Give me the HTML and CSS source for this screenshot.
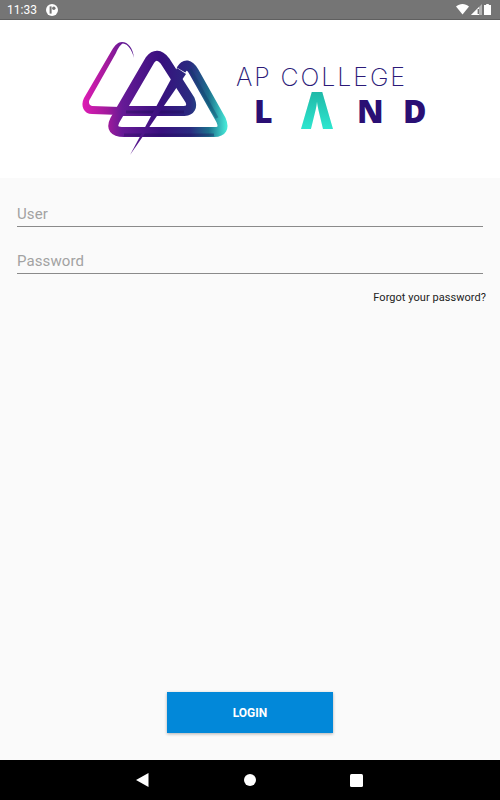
FILE: index.html
```html
<!DOCTYPE html>
<html lang="en">
<head>
  <meta charset="UTF-8">
  <meta name="viewport" content="width=device-width, initial-scale=1.0">
  <title>AP College Land</title>
  <link rel="stylesheet" href="styles.css">
</head>
<body>
  <div class="status-bar">
    <div class="status-left">
      <span class="clock">11:33</span>
      <svg class="status-app" width="12" height="12" viewBox="0 0 12 12">
        <circle cx="6" cy="6" r="6" fill="#fff"/>
        <rect x="3.6" y="2.4" width="2" height="7.2" fill="#757575"/>
        <circle cx="7.8" cy="4.2" r="1.7" fill="#757575"/>
      </svg>
    </div>
    <div class="status-right">
      <svg width="13" height="11" viewBox="0 0 13 11"><path d="M0 2.6C3.6-.8 9.4-.8 13 2.6L6.5 10.6Z" fill="#fff"/></svg>
      <svg width="11" height="11" viewBox="0 0 11 11"><path d="M11 0V11H0Z" fill="#fff" opacity=".45"/><path d="M8 3V11H0L8 3Z" fill="#fff"/><rect x="6.6" y="5" width="1.4" height="5" fill="#757575"/></svg>
      <svg width="7" height="11" viewBox="0 0 7 11"><path d="M2.2 0H4.8V1H7V11H0V1H2.2Z" fill="#fff"/></svg>
    </div>
  </div>

  <header class="logo-area">
    <svg class="logo" width="350" height="120" viewBox="75 40 350 120">
      <defs>
        <linearGradient id="ribbon" gradientUnits="userSpaceOnUse" x1="82" y1="0" x2="226" y2="0">
          <stop offset="0" stop-color="#e01cb4"/>
          <stop offset="0.18" stop-color="#a01a9c"/>
          <stop offset="0.28" stop-color="#661a96"/>
          <stop offset="0.55" stop-color="#38107e"/>
          <stop offset="0.75" stop-color="#2a2a80"/>
          <stop offset="0.88" stop-color="#1c6f8c"/>
          <stop offset="1" stop-color="#45e6d6"/>
        </linearGradient>
        <linearGradient id="peak" gradientUnits="userSpaceOnUse" x1="0" y1="92" x2="0" y2="129">
          <stop offset="0" stop-color="#1fb9a8"/>
          <stop offset="1" stop-color="#2ee6cf"/>
        </linearGradient>
      </defs>
      <!-- pink end of the ribbon, gets thinner towards the top -->
      <path d="M134 58C133 48 128 42 122 42C118 42 115 45 112 50L84 98C80 106 84 114 92 114L120 115L120 107L92 106C89 105 88 102 90 99L116 53C118 48 121 44 123 43.500C128 44 132 50 134 58Z" fill="url(#ribbon)"/>
      <!-- middle triangle -->
      <path d="M120 111H184Q194 110 190 100L165 61Q157 51 150 60L115 120Q109 132 124 132H214Q226 132 221 120L194 72Q187 60 181 70" fill="none" stroke="url(#ribbon)" stroke-width="10" stroke-linejoin="round"/>
      <path d="M126 112H184" fill="none" stroke="#1d0b55" stroke-width="3" opacity=".4"/>
      <path d="M124 135H214" fill="none" stroke="#1d0b55" stroke-width="3" opacity=".35"/>
      <path d="M190 69L217 118" fill="none" stroke="#0d3f66" stroke-width="3" opacity=".4"/>
      <!-- thin diagonal that ends in a point -->
      <path d="M177 68L186 74L130 155Z" fill="url(#ribbon)"/>
      <text class="logo-top" x="236" y="86">AP COLLEGE</text>
      <text class="logo-land" x="254" y="123">L</text>
      <text class="logo-peak" x="301" y="129" textLength="32" lengthAdjust="spacingAndGlyphs">&#923;</text>
      <text class="logo-land" x="357" y="123">N</text>
      <text class="logo-land" x="403" y="123">D</text>
    </svg>
  </header>

  <main class="login">
    <form class="login-form">
      <input class="field" type="text" placeholder="User">
      <input class="field" type="password" placeholder="Password">
      <a class="forgot" href="#">Forgot your password?</a>
    </form>
    <button class="login-btn" type="button">LOGIN</button>
  </main>

  <nav class="nav-bar">
    <svg width="13" height="14" viewBox="0 0 13 14"><path d="M12.500 0V14L0 7Z" fill="#fff"/></svg>
    <svg class="nav-home" width="12" height="12" viewBox="0 0 12 12"><circle cx="6" cy="6" r="6" fill="#fff"/></svg>
    <svg width="13" height="13" viewBox="0 0 13 13"><rect width="13" height="13" rx="1.500" fill="#fff"/></svg>
  </nav>
</body>
</html>
```

FILE: styles.css
```css
* {
  box-sizing: border-box;
}

body {
  font-family: Roboto, "Liberation Sans", sans-serif;
  margin: 0;
  height: 800px;
  display: flex;
  flex-direction: column;
  background-color: #fafafa;
  overflow: hidden;
}

.status-bar {
  height: 20px;
  padding: 0 9px 0 7px;
  display: flex;
  justify-content: space-between;
  align-items: center;
  background-color: #757575;
  border-bottom: 1px solid #5f5f5f;
}

.status-left {
  display: flex;
  align-items: center;
  gap: 9px;
}

.clock {
  font-size: 12px;
  color: #fff;
}

.status-right {
  display: flex;
  align-items: center;
  gap: 2px;
}

.logo-area {
  height: 158px;
  background-color: #fff;
  display: flex;
  justify-content: center;
  align-items: flex-start;
  padding-top: 20px;
}

.logo {
  display: block;
  overflow: visible;
}

.logo-top {
  font-family: Inter, Lato, sans-serif;
  font-weight: 200;
  font-size: 25px;
  letter-spacing: 1.9px;
  fill: #2b1a78;
}

.logo-land {
  font-family: "Open Sans", sans-serif;
  font-weight: 800;
  font-size: 32px;
  fill: #2a0f74;
}

.logo-peak {
  font-family: "Open Sans", sans-serif;
  font-weight: 800;
  font-size: 52px;
  fill: url(#peak);
}

.login {
  flex: 1;
  display: flex;
  flex-direction: column;
  justify-content: space-between;
  padding: 0 14px 27px 17px;
}

.login-form {
  display: flex;
  flex-direction: column;
  padding-top: 22px;
}

.field {
  width: 466px;
  height: 27px;
  margin-bottom: 20px;
  padding: 2px 0 0;
  border: none;
  border-bottom: 1px solid #8a8a8a;
  background: transparent;
  font-family: inherit;
  font-size: 15px;
  letter-spacing: 0.1px;
  outline: none;
}

.field::placeholder {
  color: #a2a2a2;
  opacity: 1;
}

.forgot {
  align-self: flex-end;
  margin-top: -3px;
  font-size: 11px;
  letter-spacing: 0.05px;
  color: #222;
  text-decoration: none;
}

.login-btn {
  align-self: center;
  width: 166px;
  height: 41px;
  margin-right: 3px;
  border: none;
  background-color: #0288d9;
  color: #fff;
  font-family: inherit;
  font-size: 12px;
  font-weight: 700;
  box-shadow: 0 1px 3px rgba(0,0,0,0.3);
  cursor: pointer;
}

.nav-bar {
  height: 40px;
  padding-right: 1px;
  background-color: #000;
  display: flex;
  justify-content: center;
  align-items: center;
  gap: 94px;
}

.nav-home {
  margin-left: 1px;
}
```
